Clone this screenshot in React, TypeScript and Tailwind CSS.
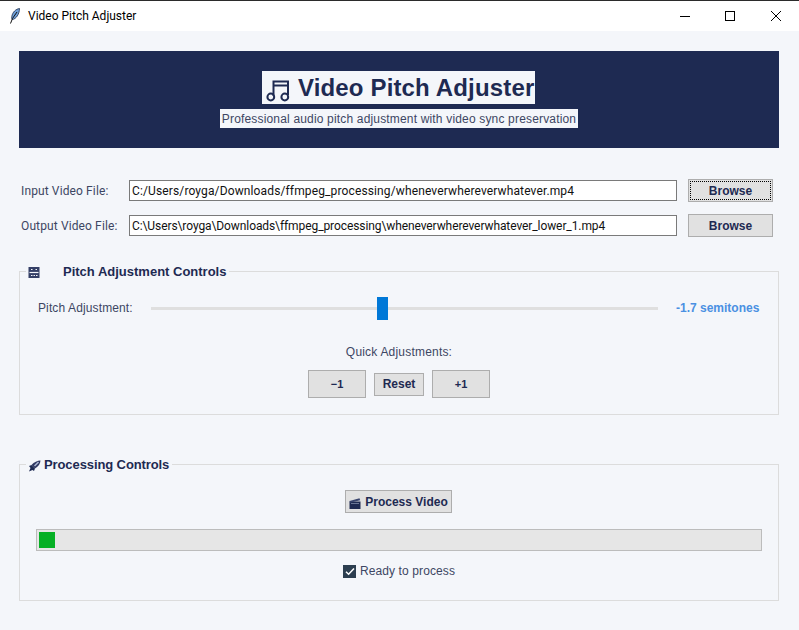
import React from 'react';

const sans = "font-['Liberation_Sans',Arial,sans-serif]";
const ui = "font-['Roboto','Open_Sans',sans-serif]";

const FeatherIcon = () => (
  <svg width="12" height="16" viewBox="0 0 12 16" className="shrink-0">
    <path d="M10.5 0.5C7 1 3.5 4 2.8 8.5 2.5 10.5 2.8 11.5 3.5 11.5 7 11 10.5 6 10.5 0.5Z" fill="#6f9fd8" stroke="#1b2b4a" strokeWidth="0.8" />
    <path d="M8 4 3.5 10.5 1.5 15.5" fill="none" stroke="#111" strokeWidth="1" />
  </svg>
);

const MusicIcon = () => (
  <svg width="24" height="23" viewBox="0 0 24 23" className="shrink-0">
    <g fill="none" stroke="#1e2a52" strokeWidth="2">
      <path d="M7.5 17V2.5H22V16" />
      <path d="M7.5 6.5H22" />
      <circle cx="4.8" cy="18" r="3.4" />
      <circle cx="18.8" cy="18" r="3.4" />
    </g>
  </svg>
);

const ControlsIcon = () => (
  <svg width="12" height="11" viewBox="0 0 12 11" className="shrink-0">
    <rect x="0.5" y="0" width="11" height="11" fill="#343f66" />
    <path d="M1.5 5.5h9" stroke="#f4f6fa" strokeWidth="1.2" />
    <path d="M3 2.5h1.5M7.5 2.5H9M3 8.5h1.5M5.5 8.5H7M8 8.5h1.5" stroke="#f4f6fa" strokeWidth="1.2" />
  </svg>
);

const RocketIcon = () => (
  <svg width="13" height="12" viewBox="0 0 13 12" className="shrink-0">
    <path d="M12.5 0.5C9.5 0.6 6 2 3.5 5L7 8.5C10.5 6.5 12.3 3.8 12.5 0.5Z" fill="#2d3660" />
    <path d="M10.5 2 6.5 6" stroke="#a9b4d0" strokeWidth="1.6" />
    <path d="M3.5 5 1 6 2.5 8 1 11.5 4.5 10 6 11 7 8.5Z" fill="#1e2a52" />
  </svg>
);

const ClapperIcon = () => (
  <svg width="12" height="11" viewBox="0 0 12 11" className="shrink-0">
    <rect x="0.5" y="3.5" width="11" height="7.5" fill="#1e2a52" />
    <path d="M0.5 3 10.5 0.3 11.2 2.2 1 4.8Z" fill="#39456e" />
    <path d="M2 5.5h8" stroke="#7e8aa8" strokeWidth="0.8" />
  </svg>
);

const CheckIcon = () => (
  <svg width="10" height="9" viewBox="0 0 10 9" className="shrink-0">
    <path d="M1 4.8 3.6 7.2 9 1.4" fill="none" stroke="#fff" strokeWidth="1.5" />
  </svg>
);

const FileRow = ({ label, value, focused }: { label: string; value: string; focused?: boolean }) => (
  <div className="flex items-center h-[23px]">
    <span className={`w-[110px] pl-[2px] text-[12px] tracking-[0.12px] text-[#3d4663] ${ui}`}>{label}</span>
    <div className={`w-[548px] h-[21px] bg-white border border-[#7a7a7a] flex items-center pl-[2px] text-[12px] leading-none text-[#111] whitespace-nowrap overflow-hidden ${focused ? 'tracking-[0.13px]' : 'tracking-[-0.09px]'} ${ui}`}>
      {value}
    </div>
    <button className={`ml-[11px] w-[85px] h-[23px] flex items-center justify-center bg-[#e1e1e1] border-[1px] border-[#adadad] text-[12px] font-bold text-[#1e2a52] ${sans}`}>
      <span className={focused ? 'w-[81px] h-[19px] pt-[1px] leading-[17px] border border-dotted border-black' : ''}>Browse</span>
    </button>
  </div>
);

const SmallBtn = ({ label, wide }: { label: string; wide?: boolean }) => (
  <button className={`${wide ? 'w-[58px] h-[28px] text-[11px]' : 'w-[50px] h-[23px] text-[12px]'} flex items-center justify-center bg-[#e1e1e1] border border-[#adadad] font-bold text-[#1e2a52] ${sans}`}>
    {label}
  </button>
);

export default function App() {
  return (
    <div className={`w-[799px] h-[630px] flex flex-col overflow-hidden bg-[#f4f6fa] ${sans}`}>
      {/* Title bar */}
      <div className="h-[31px] shrink-0 bg-white border-t border-[#2b2b2b] flex items-center">
        <div className="ml-[9px] mr-[7px] flex"><FeatherIcon /></div>
        <span className={`text-[12px] text-black ${ui}`}>Video Pitch Adjuster</span>
        <div className="ml-auto flex items-center mr-[18px]">
          <div className="w-[10px] h-px bg-black mr-[35px]" />
          <div className="w-[10px] h-[10px] border border-black mr-[36px]" />
          <svg width="10" height="10" viewBox="0 0 10 10"><path d="M0 0 10 10M10 0 0 10" stroke="#000" strokeWidth="1" /></svg>
        </div>
      </div>

      <div className="flex-1 flex flex-col pl-[19px] pr-[20px] pt-[20px]">
        {/* Header */}
        <div className="h-[97px] bg-[#1e2a52] flex flex-col items-center pt-[20px]">
          <div className="h-[33px] w-[273px] mr-[1px] bg-[#f4f6fa] flex items-center pl-[4px] gap-[8px]">
            <span className="mt-[6px] flex"><MusicIcon /></span>
            <span className="text-[24px] font-bold tracking-[0.15px] text-[#1e2a52] leading-none whitespace-nowrap">Video Pitch Adjuster</span>
          </div>
          <div className="mt-[5px] h-[19px] w-[358px] bg-[#f4f6fa] flex items-center justify-center text-[12px] tracking-[0.17px] text-[#3d4663] whitespace-nowrap">
            Professional audio pitch adjustment with video sync preservation
          </div>
        </div>

        {/* File rows */}
        <div className="mt-[31px] flex flex-col gap-[12px]">
          <FileRow label="Input Video File:" value="C:/Users/royga/Downloads/ffmpeg_processing/wheneverwhereverwhatever.mp4" focused />
          <FileRow label="Output Video File:" value="C:\Users\royga\Downloads\ffmpeg_processing\wheneverwhereverwhatever_lower_1.mp4" />
        </div>

        {/* Pitch group */}
        <div className="relative mt-[34px] h-[144px] border border-[#dcdcdc] flex flex-col items-center">
          <div className="absolute -top-[9px] left-[6px] h-[16px] w-[203px] bg-[#f4f6fa] flex items-center">
            <span className="ml-[2px] mt-[2px] flex"><ControlsIcon /></span>
            <span className="ml-[23px] text-[13px] font-bold text-[#1e2a52] leading-none whitespace-nowrap">Pitch Adjustment Controls</span>
          </div>
          <div className="w-full flex items-center h-[24px] mt-[24px]">
            <span className="ml-[18px] w-[113px] text-[12px] tracking-[0.12px] text-[#3d4663]">Pitch Adjustment:</span>
            <div className="relative w-[507px] h-[3px] bg-[#dfdfdf]">
              <div className="absolute left-[226px] -top-[10px] w-[11px] h-[23px] bg-[#0078d7]" />
            </div>
            <span className="ml-[18px] text-[12px] font-bold text-[#4a90e2] whitespace-nowrap">-1.7 semitones</span>
          </div>
          <div className="mt-[25px] text-[12px] tracking-[0.2px] text-[#3d4663] leading-[14px]">Quick Adjustments:</div>
          <div className="mt-[11px] flex items-center gap-[8px]">
            <SmallBtn label="−1" wide />
            <SmallBtn label="Reset" />
            <SmallBtn label="+1" wide />
          </div>
        </div>

        {/* Processing group */}
        <div className="relative mt-[49px] h-[137px] border border-[#dcdcdc] flex flex-col items-center px-[16px]">
          <div className="absolute -top-[9px] left-[6px] h-[16px] w-[146px] bg-[#f4f6fa] flex items-center">
            <span className="ml-[2px] mt-[4px] flex"><RocketIcon /></span>
            <span className="ml-[3px] text-[13px] font-bold tracking-[-0.1px] text-[#1e2a52] leading-none whitespace-nowrap">Processing Controls</span>
          </div>
          <button className="mt-[25px] mr-[1px] w-[107px] h-[23px] flex items-center justify-center gap-[4px] bg-[#e1e1e1] border border-[#adadad] text-[12px] font-bold text-[#1e2a52] whitespace-nowrap">
            <span className="mt-[3px] flex"><ClapperIcon /></span>
            Process Video
          </button>
          <div className="mt-[16px] w-[726px] h-[22px] bg-[#e6e6e6] border border-[#bcbcbc] p-[2px]">
            <div className="w-[16px] h-[16px] bg-[#06b025]" />
          </div>
          <div className="mt-[13px] flex items-center gap-[4px]">
            <div className="w-[13px] h-[13px] bg-[#2c3e50] flex items-center justify-center"><CheckIcon /></div>
            <span className="text-[12px] tracking-[0.1px] text-[#3d4663] leading-[14px]">Ready to process</span>
          </div>
        </div>
      </div>
    </div>
  );
}
